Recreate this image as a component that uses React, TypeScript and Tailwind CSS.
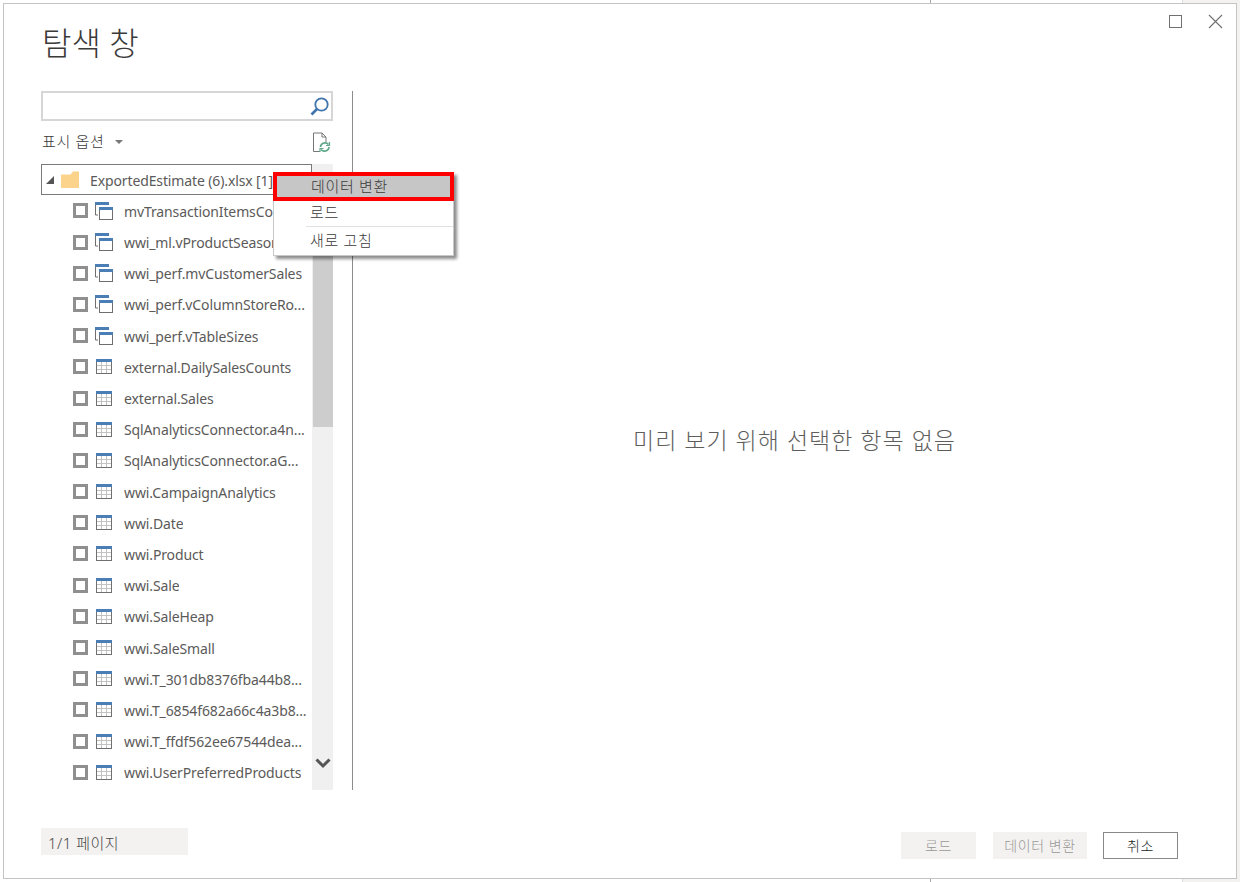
import React from "react";

const FONT = "font-['Noto_Sans','Noto_Sans_CJK_KR',sans-serif]";

const viewItems = [
  "mvTransactionItemsCounts",
  "wwi_ml.vProductSeasonality",
  "wwi_perf.mvCustomerSales",
  "wwi_perf.vColumnStoreRo...",
  "wwi_perf.vTableSizes",
];
const tableItems = [
  "external.DailySalesCounts",
  "external.Sales",
  "SqlAnalyticsConnector.a4n...",
  "SqlAnalyticsConnector.aG...",
  "wwi.CampaignAnalytics",
  "wwi.Date",
  "wwi.Product",
  "wwi.Sale",
  "wwi.SaleHeap",
  "wwi.SaleSmall",
  "wwi.T_301db8376fba44b8...",
  "wwi.T_6854f682a66c4a3b8...",
  "wwi.T_ffdf562ee67544dea...",
  "wwi.UserPreferredProducts",
];

function ViewIcon() {
  return (
    <svg width="18" height="18" viewBox="0 0 18 18" className="shrink-0">
      <path d="M0.5 13V1H14" fill="none" stroke="#6e6e6e" strokeWidth="1" />
      <path d="M0.500 13H3" fill="none" stroke="#6e6e6e" strokeWidth="1" />
      <rect x="0" y="0" width="14" height="3" fill="#4a7eb5" />
      <rect x="4.5" y="5.5" width="13" height="12" fill="#fff" stroke="#6e6e6e" />
      <rect x="4" y="5" width="14" height="3" fill="#4a7eb5" />
    </svg>
  );
}

function TableIcon() {
  return (
    <svg width="16" height="15" viewBox="0 0 16 15" className="shrink-0">
      <rect x="0.5" y="0.5" width="15" height="14" fill="#fff" stroke="#707070" />
      <path d="M5.5 3v11M10.5 3v11M1 6.500h14M1 10.500h14" stroke="#c2c2c2" strokeWidth="1" fill="none" />
      <rect x="0" y="0" width="16" height="3" fill="#4a7eb5" />
    </svg>
  );
}

function Row({ label, view }: { label: string; view?: boolean }) {
  return (
    <div className="flex h-[31.2px] items-center">
      <span className="ml-[32px] h-[15px] w-[15px] shrink-0 border-[3px] border-[#8f8f8f] bg-white" />
      <span className={view ? "ml-[7px] w-[24px]" : "ml-[8px] w-[23px]"}>
        <span className="flex">{view ? <ViewIcon /> : <TableIcon />}</span>
      </span>
      <span className="ml-[5px] translate-y-[1px] whitespace-nowrap overflow-hidden text-[14px] leading-[20px] tracking-[-0.12px] text-[#5b5a59]">
        {label}
      </span>
    </div>
  );
}

export default function App() {
  return (
    <div className={`relative h-[882px] w-[1240px] overflow-hidden bg-white pl-[3px] pt-[3px] ${FONT}`}>
      <div className="absolute bottom-0 right-0 top-0 w-[58px] border-l border-[#dcdcdc] bg-[#f3f2f1]" />
      <div className="absolute bottom-0 left-[930px] top-0 w-px bg-[#a8a8a8]" />

      <div className="relative flex h-[876px] w-[1234px] flex-col border border-[#c4c4c4] bg-white pl-[37px]">
        <div className="absolute right-[13px] top-[10px] flex items-center gap-[26px]">
          <span className="h-[13px] w-[13px] border border-[#707070]" />
          <svg width="15" height="15" viewBox="0 0 15 15">
            <path d="M1 1l13 13M14 1L1 14" stroke="#707070" strokeWidth="1.1" fill="none" />
          </svg>
        </div>

        <h1 className="ml-px mt-[16px] h-[71px] text-[32px] font-light leading-[46px] tracking-[0px] text-[#3b3a39]">
          탐색 창
        </h1>

        <div className="flex h-[699px]">
          <div className="flex w-[292px] flex-col">
            <div className="flex h-[30px] items-center justify-end border-2 border-[#d6d6d6] bg-white pr-[2px]">
              <svg width="19" height="19" viewBox="0 0 19 19">
                <circle cx="11.5" cy="7.5" r="6.2" fill="none" stroke="#3f74ac" strokeWidth="1.8" />
                <path d="M7 12l-5.500 5.500" stroke="#3f74ac" strokeWidth="2.600" fill="none" />
              </svg>
            </div>
            <div className="flex h-[43px] items-center justify-between pr-[2px]">
              <div className="ml-px flex -translate-y-px items-center text-[15px] font-light tracking-[0.7px] text-[#3b3a39]">
                표시 옵션
                <span className="ml-[10px] mt-[1px] h-0 w-0 border-x-[4px] border-t-[4px] border-x-transparent border-t-[#777]" />
              </div>
              <svg width="19" height="21" viewBox="0 0 19 21">
                <path d="M8 19.500H1.500V1H10l4 4v5M10 1v4h4" fill="none" stroke="#777" strokeWidth="1" />
                <path d="M8.500 15a4.500 4.500 0 0 1 8-2.500M17 15a4.500 4.500 0 0 1-8 2.500" fill="none" stroke="#5fa88a" strokeWidth="1.700" />
                <path d="M17.500 10v3.500H14M8 20v-3.500h3.500" fill="none" stroke="#5fa88a" strokeWidth="1.200" />
              </svg>
            </div>
            <div className="flex min-h-0 flex-1">
              <div className="min-w-0 flex-1">
                <div className="flex h-[31px] items-center border border-[#7a7a7a] bg-white">
                  <span className="ml-[4px] h-0 w-0 border-b-[8px] border-l-[8px] border-b-[#555] border-l-transparent" />
                  <svg width="18" height="17" viewBox="0 0 18 17" className="ml-[7px] shrink-0">
                    <path d="M0 3.500h9.500L12 0.500h6V17H0z" fill="#fbd38b" />
                  </svg>
                  <span className="ml-[11px] translate-y-[1px] whitespace-nowrap text-[14px] leading-[20px] tracking-[-0.12px] text-[#5b5a59]">
                    ExportedEstimate (6).xlsx [1]
                  </span>
                </div>
                <div className="pt-[0.3px]">
                  {viewItems.map((t) => (
                    <Row key={t} label={t} view />
                  ))}
                  {tableItems.map((t) => (
                    <Row key={t} label={t} />
                  ))}
                </div>
              </div>
              <div className="flex w-[21px] shrink-0 flex-col bg-[#f0f0f0] pl-[1px]">
                <div className="h-[91px]" />
                <div className="h-[172px] bg-[#cdcdcd]" />
                <div className="flex flex-1 items-end justify-center pb-[21px]">
                  <svg width="16" height="11" viewBox="0 0 16 11">
                    <path d="M1.500 1.500L8 8l6.500-6.500" fill="none" stroke="#555" strokeWidth="3" />
                  </svg>
                </div>
              </div>
            </div>
          </div>

          <div className="ml-[19px] w-[1px] bg-[#8c8c8c]" />

          <div className="flex flex-1 items-center justify-center">
            <span className="text-[23px] font-light tracking-[1px] text-[#605e5c]">
              미리 보기 위해 선택한 항목 없음
            </span>
          </div>
        </div>

        <div className="mt-[38px] flex items-start justify-between pr-[58px]">
          <div className="flex h-[27px] w-[147px] items-center bg-[#f3f2f1] pl-[7px] text-[15px] font-light tracking-[0.5px] text-[#484644]">
            <span className="translate-y-[2px]">1/1 페이지</span>
          </div>
          <div className="mt-[4px] flex text-[14px] font-light">
            <div className="mr-[17px] flex h-[27px] w-[75px] items-center justify-center bg-[#f3f2f1] tracking-[0.6px] text-[#9a9896]">로드</div>
            <div className="mr-[16px] flex h-[27px] w-[94px] items-center justify-center bg-[#f3f2f1] tracking-[0.6px] text-[#9a9896]">데이터 변환</div>
            <div className="flex h-[27px] w-[75px] items-center justify-center border border-[#8a8886] bg-white tracking-[0.6px] text-[#201f1e]">취소</div>
          </div>
        </div>

        <div className="absolute left-[269px] top-[168px] w-[181px] border border-[#c8c8c8] bg-white text-[15px] font-light tracking-[0.7px] text-[#3b3a39] shadow-[3px_3px_3px_rgba(0,0,0,0.45)]">
          <div className="-m-px mb-0 flex h-[29px] items-center border-4 border-[#ff0000] bg-[#c6c6c6] pb-[1px] pl-[34px]">데이터 변환</div>
          <div className="flex h-[25px] items-center pb-[2px] pl-[36px]">로드</div>
          <div className="ml-[32px] h-px bg-[#e2e2e2]" />
          <div className="flex h-[28px] items-center pb-[2px] pl-[36px]">새로 고침</div>
        </div>
      </div>
    </div>
  );
}
